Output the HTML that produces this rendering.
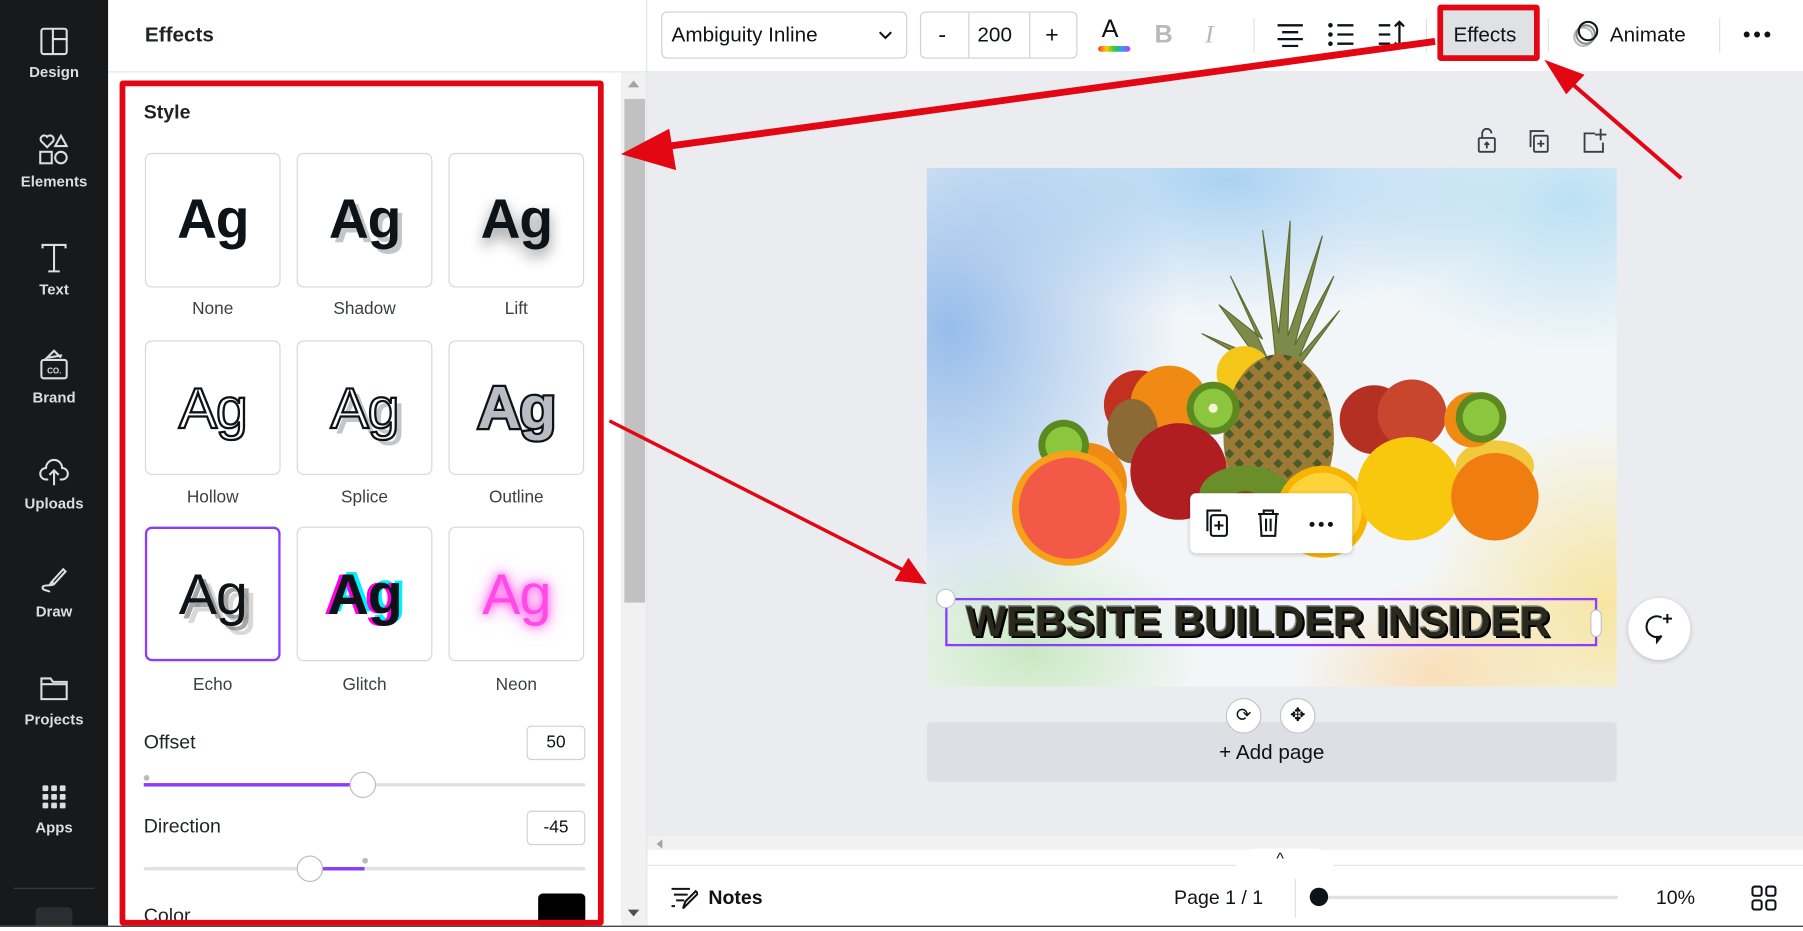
<!DOCTYPE html>
<html><head><meta charset="utf-8"><style>
*{box-sizing:border-box;margin:0;padding:0}
html,body{width:1803px;height:931px;overflow:hidden;background:#fff;font-family:"Liberation Sans",sans-serif;color:#0e1318}
#r{position:absolute;left:0;top:0;width:1568px;height:810px;transform:scale(1.1499);transform-origin:0 0;overflow:hidden;background:#fff}
.a{position:absolute}
.side{left:0;top:0;width:94px;height:810px;background:#18191b}
.si{position:absolute;left:0;width:94px;text-align:center;color:#dcdde0;font-size:13px;font-weight:bold}
.si svg{display:block;margin:0 auto 6px}
.tile{position:absolute;width:118px;height:117px;border:1.5px solid #d5d7da;border-radius:6px;background:#fff;display:flex;align-items:center;justify-content:center;font-size:48px;font-weight:bold;letter-spacing:-1px}
.lbl{position:absolute;width:118px;text-align:center;font-size:15px;color:#3b3f44}
.tb{position:absolute;top:10px;height:41px;border:1px solid #cfd1d4;border-radius:5px;background:#fff}
.ib{position:absolute;width:51px;height:30px;border:1px solid #cfd1d4;border-radius:4px;font-size:15px;text-align:center;line-height:28px}
</style></head><body><div id="r">

<div class="a side"></div>
<div class="si" style="top:23px"><svg width="26" height="26" viewBox="0 0 26 26" fill="none" stroke="#dcdde0" stroke-width="1.8"><rect x="2" y="2" width="22" height="22" rx="2"/><path d="M12 2v22M12 11h12"/></svg>Design</div>
<div class="si" style="top:116px"><svg width="28" height="28" viewBox="0 0 28 28" fill="none" stroke="#dcdde0" stroke-width="1.8"><path d="M8 12 3 7a3 3 0 0 1 5-4 3 3 0 0 1 5 4z"/><path d="M20 2l5 9h-10z"/><rect x="2" y="16" width="10" height="10"/><circle cx="20" cy="21" r="5"/></svg>Elements</div>
<div class="si" style="top:210px"><svg width="26" height="28" viewBox="0 0 26 28" fill="none" stroke="#dcdde0" stroke-width="1.8"><path d="M3 6V3h20v3M13 3v23M8 26h10"/></svg>Text</div>
<div class="si" style="top:302px"><svg width="28" height="30" viewBox="0 0 28 30" fill="none" stroke="#dcdde0" stroke-width="1.8"><rect x="3" y="11" width="22" height="16" rx="2"/><path d="M6 11l8-8 6 6M9 9l12-2"/><text x="8" y="23" font-size="7" fill="#dcdde0" stroke="none" font-family="Liberation Sans">CO.</text></svg>Brand</div>
<div class="si" style="top:396px"><svg width="28" height="28" viewBox="0 0 28 28" fill="none" stroke="#dcdde0" stroke-width="1.8"><path d="M9 21H7a5 5 0 0 1 0-10 7 7 0 0 1 14 0 5 5 0 0 1 0 10h-2M14 26V13M10 17l4-4 4 4"/></svg>Uploads</div>
<div class="si" style="top:490px"><svg width="28" height="28" viewBox="0 0 28 28" fill="none" stroke="#dcdde0" stroke-width="1.8"><path d="M12 16 22 5l2 2-10 11zM12 16l-2 3M14 18c-3 2-10 0-10 3s6 2 6 4"/></svg>Draw</div>
<div class="si" style="top:586px"><svg width="28" height="26" viewBox="0 0 28 26" fill="none" stroke="#dcdde0" stroke-width="1.8"><path d="M3 4h8l2 3h12v15H3z M3 9h22"/></svg>Projects</div>
<div class="si" style="top:680px"><svg width="24" height="26" viewBox="0 0 24 24" fill="#dcdde0"><rect x="2" y="2" width="5" height="5" rx="1"/><rect x="9.5" y="2" width="5" height="5" rx="1"/><rect x="17" y="2" width="5" height="5" rx="1"/><rect x="2" y="9.5" width="5" height="5" rx="1"/><rect x="9.5" y="9.5" width="5" height="5" rx="1"/><rect x="17" y="9.5" width="5" height="5" rx="1"/><rect x="2" y="17" width="5" height="5" rx="1"/><rect x="9.5" y="17" width="5" height="5" rx="1"/><rect x="17" y="17" width="5" height="5" rx="1"/></svg>Apps</div>
<div class="a" style="left:12px;top:772px;width:70px;height:1px;background:#3a3c40"></div>
<div class="a" style="left:31px;top:789px;width:32px;height:20px;background:#2c2d30;border-radius:4px"></div>

<div class="a" style="left:94px;top:0;width:469px;height:63px;border-bottom:1px solid #e2e4e7;border-right:1px solid #e2e4e7"></div>
<div class="a" style="left:126px;top:20px;font-size:18px;font-weight:bold;color:#1f2328">Effects</div>
<div class="a" style="left:540px;top:63px;width:23px;height:742px;background:#f1f1f1;border-right:1px solid #e2e4e7"></div>
<div class="a" style="left:543px;top:86px;width:18px;height:438px;background:#c1c1c1"></div>
<div class="a" style="left:546px;top:70px;width:0;height:0;border:5px solid transparent;border-bottom:6px solid #a3a3a3;border-top:0"></div>
<div class="a" style="left:546px;top:791px;width:0;height:0;border:5px solid transparent;border-top:6px solid #505050;border-bottom:0"></div>

<div class="a" style="left:125px;top:88px;font-size:17px;font-weight:bold;color:#1f2328">Style</div>
<div class="tile" style="left:126px;top:133px"><span style="color:#0e1318">Ag</span></div>
<div class="tile" style="left:258px;top:133px"><span style="color:#0e1318;text-shadow:4px 4px 0 #c4c6c9">Ag</span></div>
<div class="tile" style="left:390px;top:133px"><span style="color:#0e1318;text-shadow:0 6px 12px rgba(0,0,0,.45)">Ag</span></div>
<div class="lbl" style="left:126px;top:260px">None</div><div class="lbl" style="left:258px;top:260px">Shadow</div><div class="lbl" style="left:390px;top:260px">Lift</div>

<div class="tile" style="left:126px;top:296px"><span style="color:#fff;-webkit-text-stroke:2px #0e1318;font-weight:normal;font-size:50px">Ag</span></div>
<div class="tile" style="left:258px;top:296px"><span style="color:#fff;-webkit-text-stroke:2px #0e1318;font-weight:normal;font-size:50px;text-shadow:5px 5px 0 #c4c6c9">Ag</span></div>
<div class="tile" style="left:390px;top:296px"><span style="color:#b9bdc3;-webkit-text-stroke:4px #0e1318;paint-order:stroke fill;font-size:52px">Ag</span></div>
<div class="lbl" style="left:126px;top:424px">Hollow</div><div class="lbl" style="left:258px;top:424px">Splice</div><div class="lbl" style="left:390px;top:424px">Outline</div>

<div class="tile" style="left:126px;top:458px;border:2px solid #8b3dff"><span style="font-weight:normal;font-size:50px;color:#0e1318;text-shadow:4px 4px 0 rgba(130,130,130,.7),8px 8px 0 rgba(190,190,190,.6)">Ag</span></div>
<div class="tile" style="left:258px;top:458px"><span style="color:#0e1318;font-size:50px;text-shadow:-3px 0 0 #ff00e6,3px -2px 0 #00f0ff">Ag</span></div>
<div class="tile" style="left:390px;top:458px"><span style="color:#ff4ae8;font-weight:normal;font-size:50px;text-shadow:0 0 8px #ff3de0,0 0 16px #ff7ef0">Ag</span></div>
<div class="lbl" style="left:126px;top:587px">Echo</div><div class="lbl" style="left:258px;top:587px">Glitch</div><div class="lbl" style="left:390px;top:587px">Neon</div>

<div class="a" style="left:125px;top:636px;font-size:17px;color:#1f2328">Offset</div>
<div class="ib" style="left:458px;top:631px">50</div>
<div class="a" style="left:125px;top:681px;width:384px;height:3px;background:#dfe1e4;border-radius:2px"></div>
<div class="a" style="left:125px;top:681px;width:190px;height:3px;background:#8b3dff"></div>
<div class="a" style="left:125px;top:674px;width:5px;height:5px;background:#b8bbc0;border-radius:50%"></div>
<div class="a" style="left:304px;top:671px;width:23px;height:23px;background:#fff;border:1px solid #b8bbc0;border-radius:50%"></div>

<div class="a" style="left:125px;top:709px;font-size:17px;color:#1f2328">Direction</div>
<div class="ib" style="left:458px;top:705px">-45</div>
<div class="a" style="left:125px;top:754px;width:384px;height:3px;background:#dfe1e4;border-radius:2px"></div>
<div class="a" style="left:269px;top:754px;width:48px;height:3px;background:#8b3dff"></div>
<div class="a" style="left:315px;top:746px;width:5px;height:5px;background:#b8bbc0;border-radius:50%"></div>
<div class="a" style="left:258px;top:744px;width:23px;height:23px;background:#fff;border:1px solid #b8bbc0;border-radius:50%"></div>
<div class="a" style="left:125px;top:787px;font-size:17px;color:#1f2328">Color</div>
<div class="a" style="left:468px;top:777px;width:41px;height:30px;background:#000;border-radius:4px"></div>

<div class="a" style="left:104px;top:70px;width:421px;height:735px;border:5px solid #e30613;border-radius:3px"></div>

<div class="a" style="left:563px;top:0;width:1005px;height:63px;border-bottom:1px solid #e2e4e7;background:#fff"></div>
<div class="tb" style="left:575px;width:214px"></div>
<div class="a" style="left:584px;top:20px;font-size:18px">Ambiguity Inline</div>
<svg class="a" style="left:763px;top:26px" width="14" height="10" viewBox="0 0 14 10" fill="none" stroke="#0e1318" stroke-width="1.8"><path d="M2 2l5 5 5-5"/></svg>
<div class="tb" style="left:800px;width:137px"></div>
<div class="a" style="left:842px;top:11px;width:1px;height:39px;background:#cfd1d4"></div>
<div class="a" style="left:895px;top:11px;width:1px;height:39px;background:#cfd1d4"></div>
<div class="a" style="left:816px;top:20px;font-size:20px">-</div>
<div class="a" style="left:850px;top:20px;font-size:18px">200</div>
<div class="a" style="left:909px;top:20px;font-size:20px">+</div>
<div class="a" style="left:958px;top:12px;font-size:22px">A</div>
<div class="a" style="left:955px;top:40px;width:28px;height:5px;border-radius:3px;background:linear-gradient(90deg,#f33,#fc0,#3c3,#39f,#c3f)"></div>
<div class="a" style="left:1004px;top:17px;font-size:22px;font-weight:bold;color:#b6b9be">B</div>
<div class="a" style="left:1048px;top:17px;font-size:22px;font-style:italic;color:#b6b9be;font-family:'Liberation Serif',serif">I</div>
<div class="a" style="left:1090px;top:16px;width:1px;height:30px;background:#dfe1e4"></div>
<svg class="a" style="left:1110px;top:19px" width="24" height="22" viewBox="0 0 24 22" stroke="#0e1318" stroke-width="2"><path d="M1 3h22M5 9h14M1 15h22M5 21h14"/></svg>
<svg class="a" style="left:1154px;top:18px" width="24" height="24" viewBox="0 0 24 24" fill="#0e1318" stroke="#0e1318" stroke-width="2"><circle cx="3" cy="4" r="2" stroke="none"/><circle cx="3" cy="12" r="2" stroke="none"/><circle cx="3" cy="20" r="2" stroke="none"/><path d="M9 4h14M9 12h14M9 20h14"/></svg>
<svg class="a" style="left:1198px;top:17px" width="26" height="26" viewBox="0 0 26 26" fill="none" stroke="#0e1318" stroke-width="2"><path d="M1 5h10M1 13h10M1 21h10M19 2v22M15 6l4-4 4 4M15 20l4 4 4-4"/></svg>
<div class="a" style="left:1240px;top:16px;width:1px;height:30px;background:#dfe1e4"></div>
<div class="a" style="left:1250px;top:4px;width:89px;height:49px;border:5px solid #e30613;border-radius:3px;background:#dfe1e5"></div>
<div class="a" style="left:1264px;top:20px;font-size:18px">Effects</div>
<div class="a" style="left:1346px;top:16px;width:1px;height:30px;background:#dfe1e4"></div>
<svg class="a" style="left:1364px;top:16px" width="30" height="30" viewBox="0 0 30 30" fill="none" stroke-width="1.8"><circle cx="13" cy="16" r="8" stroke="#bbb"/><circle cx="15" cy="14" r="8" stroke="#888"/><circle cx="17" cy="11" r="8" stroke="#0e1318"/></svg>
<div class="a" style="left:1400px;top:20px;font-size:18px">Animate</div>
<div class="a" style="left:1495px;top:16px;width:1px;height:30px;background:#dfe1e4"></div>
<svg class="a" style="left:1515px;top:26px" width="26" height="8" viewBox="0 0 26 8" fill="#0e1318"><circle cx="4" cy="4" r="2.6"/><circle cx="13" cy="4" r="2.6"/><circle cx="22" cy="4" r="2.6"/></svg>

<div class="a" style="left:563px;top:63px;width:1005px;height:675px;background:#ebecf0"></div>
<svg class="a" style="left:1282px;top:110px" width="120" height="26" viewBox="0 0 120 26" fill="none" stroke="#3b3f44" stroke-width="1.6"><rect x="4" y="10" width="14" height="12" rx="1"/><path d="M7 10V6a4 4 0 0 1 8 0M11 19v-5M9 16l2-2 2 2"/><rect x="52" y="8" width="12" height="14" rx="1"/><path d="M49 18V4h12M58 12v6M55 15h6"/><path d="M105 6h-9v16h16v-8M110 2v10M105 7h10"/></svg>

<div class="a" style="left:806px;top:146px;width:600px;height:451px;overflow:hidden;background:
radial-gradient(ellipse 200px 260px at 20px 140px,rgba(120,170,230,.75),transparent),
radial-gradient(ellipse 260px 120px at 260px 10px,rgba(140,195,240,.7),transparent),
radial-gradient(ellipse 200px 130px at 560px 30px,rgba(150,210,240,.6),transparent),
radial-gradient(ellipse 160px 160px at 590px 380px,rgba(250,215,90,.55),transparent),
radial-gradient(ellipse 150px 100px at 90px 420px,rgba(160,220,140,.5),transparent),
radial-gradient(ellipse 120px 80px at 440px 440px,rgba(255,200,120,.5),transparent),#f3f6f8">
<svg width="600" height="451" viewBox="806 146 600 451">
<defs><pattern id="pp" width="12" height="12" patternUnits="userSpaceOnUse" patternTransform="rotate(45)"><rect width="12" height="12" fill="#9a7a35"/><rect width="6" height="6" fill="#4d5a2a"/></pattern></defs>
<g fill="#7d8a4a" stroke="#5e6b30" stroke-width="1"><path d="M1110 318 1098 200 1112 290 1122 192 1120 292 1150 205 1126 300 1160 240 1130 310 1165 270 1130 318z"/><path d="M1105 318 1070 240 1098 295 1060 265 1092 310 1045 290 1100 322z"/></g>
<circle cx="1082" cy="325" r="24" fill="#f5c61a"/>
<circle cx="990" cy="352" r="30" fill="#c2301f"/>
<circle cx="1017" cy="352" r="34" fill="#f08a12"/>
<ellipse cx="985" cy="375" rx="22" ry="28" fill="#8b6a35"/>
<ellipse cx="1112" cy="380" rx="48" ry="72" fill="url(#pp)"/>
<circle cx="1055" cy="355" r="23" fill="#5c8a20"/><circle cx="1055" cy="355" r="17" fill="#8cc63f"/><circle cx="1055" cy="355" r="4" fill="#f5f5d5"/>
<circle cx="1195" cy="365" r="30" fill="#b43022"/><circle cx="1228" cy="360" r="30" fill="#c8452e"/>
<ellipse cx="1300" cy="405" rx="34" ry="22" fill="#f2c83c"/>
<circle cx="1280" cy="365" r="24" fill="#f08a12"/>
<circle cx="1288" cy="363" r="22" fill="#5c8a20"/><circle cx="1288" cy="363" r="16" fill="#8cc63f"/>
<circle cx="945" cy="420" r="35" fill="#f08a12"/>
<circle cx="925" cy="387" r="22" fill="#5c8a20"/><circle cx="925" cy="387" r="16" fill="#8cc63f"/>
<circle cx="1025" cy="410" r="42" fill="#b01e22"/>
<ellipse cx="1083" cy="430" rx="40" ry="25" fill="#6a8f2a"/><circle cx="1083" cy="445" r="18" fill="#7a4a22"/>
<circle cx="1150" cy="445" r="40" fill="#f7b500"/><circle cx="1150" cy="445" r="34" fill="#ffd23a"/>
<circle cx="1225" cy="425" r="45" fill="#f8c80e"/>
<circle cx="1300" cy="432" r="38" fill="#ef7d10"/>
<circle cx="930" cy="442" r="50" fill="#f7a11a"/><circle cx="930" cy="442" r="44" fill="#f25a47"/>
</svg></div>

<div class="a" style="left:1035px;top:429px;width:141px;height:52px;background:#fff;border-radius:5px;box-shadow:0 1px 4px rgba(0,0,0,.2)"></div>
<svg class="a" style="left:1048px;top:441px" width="115" height="28" viewBox="0 0 115 28" fill="none" stroke="#0e1318" stroke-width="1.8"><rect x="5" y="7" width="14" height="18" rx="2"/><path d="M2 21V3h12M12 12v8M8 16h8"/><path d="M46 6h18M51 6V3h8v3M48 6l1 19h12l1-19M53 10v11M57 10v11"/><circle cx="93" cy="15" r="2.2" fill="#0e1318" stroke="none"/><circle cx="101" cy="15" r="2.2" fill="#0e1318" stroke="none"/><circle cx="109" cy="15" r="2.2" fill="#0e1318" stroke="none"/></svg>

<div class="a" style="left:822px;top:520px;width:567px;height:42px;border:2px solid #8b3dff"></div>
<div class="a" style="left:840px;top:520px;width:540px;font-size:37px;font-weight:bold;line-height:42px;letter-spacing:0.2px;color:#2a2a1c;text-shadow:2px 2px 0 #000,-1px -1px 0 #888;white-space:nowrap">WEBSITE BUILDER INSIDER</div>
<div class="a" style="left:814px;top:512px;width:17px;height:17px;background:#fff;border:1px solid #c0c3c7;border-radius:50%"></div>
<div class="a" style="left:1383px;top:530px;width:10px;height:24px;background:#fff;border:1px solid #c0c3c7;border-radius:5px"></div>
<div class="a" style="left:1416px;top:520px;width:54px;height:54px;background:#fff;border-radius:50%;box-shadow:0 1px 4px rgba(0,0,0,.2)"></div>
<svg class="a" style="left:1428px;top:532px" width="30" height="30" viewBox="0 0 30 30" fill="none" stroke="#0e1318" stroke-width="1.8"><path d="M17 5a9 9 0 1 0 0 16l-4 5v-5M22 2v8M18 6h8"/></svg>

<div class="a" style="left:806px;top:628px;width:600px;height:52px;background:#dedfe4;border-radius:4px"></div>
<div class="a" style="left:806px;top:644px;width:600px;text-align:center;font-size:18px">+ Add page</div>
<div class="a" style="left:1066px;top:607px;width:31px;height:31px;background:#fff;border:1px solid #c0c3c7;border-radius:50%;text-align:center;line-height:29px;font-size:16px">⟳</div>
<div class="a" style="left:1113px;top:607px;width:31px;height:31px;background:#fff;border:1px solid #c0c3c7;border-radius:50%;text-align:center;line-height:29px;font-size:16px">✥</div>

<div class="a" style="left:563px;top:727px;width:1005px;height:12px;background:#f1f1f1"></div>
<div class="a" style="left:571px;top:730px;width:0;height:0;border:4px solid transparent;border-right:5px solid #a3a3a3;border-left:0"></div>

<div class="a" style="left:563px;top:752px;width:1005px;height:53px;background:#fff;border-top:1px solid #e2e4e7"></div>
<div class="a" style="left:1075px;top:738px;width:85px;height:16px;background:#fff;border-radius:20px 20px 0 0"></div>
<div class="a" style="left:1110px;top:738px;font-size:14px">^</div>
<svg class="a" style="left:583px;top:770px" width="24" height="22" viewBox="0 0 24 22" fill="none" stroke="#0e1318" stroke-width="1.8"><path d="M1 3h16M3 8h12M5 13h7M1 18h3M11 20l2-6 9-9 2 2-9 9z"/></svg>
<div class="a" style="left:616px;top:771px;font-size:17px;font-weight:bold">Notes</div>
<div class="a" style="left:1021px;top:771px;font-size:17px">Page 1 / 1</div>
<div class="a" style="left:1126px;top:764px;width:1px;height:34px;background:#dfe1e4"></div>
<div class="a" style="left:1147px;top:779px;width:260px;height:3px;background:#dfe1e4"></div>
<div class="a" style="left:1139px;top:772px;width:16px;height:16px;background:#0e1318;border-radius:50%"></div>
<div class="a" style="left:1440px;top:771px;font-size:17px">10%</div>
<svg class="a" style="left:1523px;top:770px" width="22" height="22" viewBox="0 0 22 22" fill="none" stroke="#0e1318" stroke-width="1.8"><rect x="1" y="1" width="8" height="8" rx="2"/><rect x="13" y="1" width="8" height="8" rx="2"/><rect x="1" y="13" width="8" height="8" rx="2"/><rect x="13" y="13" width="8" height="8" rx="2"/></svg>
<div class="a" style="left:0;top:805px;width:1568px;height:5px;background:#fff;border-top:1px solid #222"></div>

<svg class="a" style="left:0;top:0" width="1568" height="810">
<path d="M1248 36 575 128" stroke="#e30613" stroke-width="6"/>
<path d="M540 134 582 112 588 148z" fill="#e30613"/>
<path d="M1462 155 1365 71" stroke="#e30613" stroke-width="3.5"/>
<path d="M1343 52 1378 65 1362 82z" fill="#e30613"/>
<path d="M530 366 790 498" stroke="#e30613" stroke-width="3"/>
<path d="M806 508 778 505 790 485z" fill="#e30613"/>
</svg>
</div></body></html>
